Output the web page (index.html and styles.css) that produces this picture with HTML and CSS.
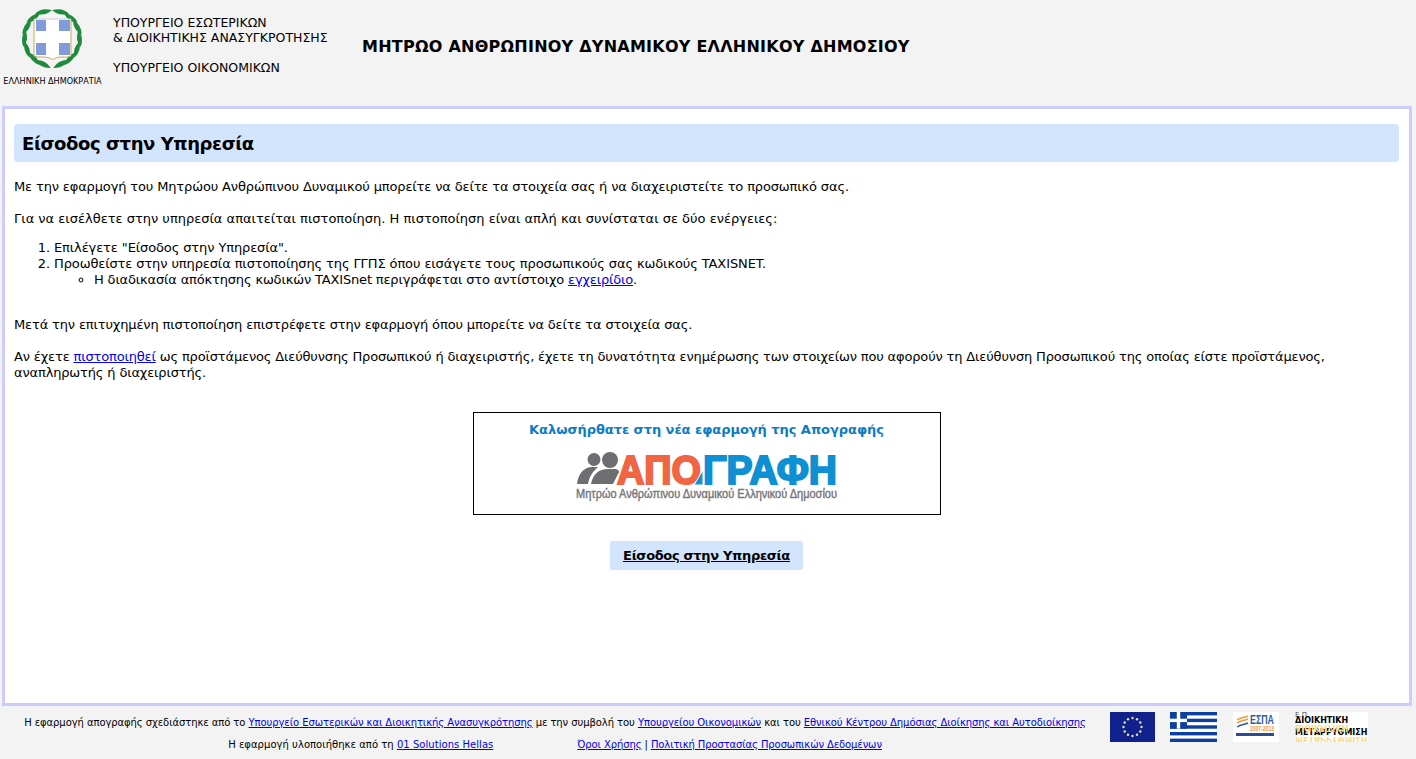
FILE: index.html
```html
<!DOCTYPE html>
<html lang="el">
  <head>
    <meta charset="UTF-8" />
    <title>Μητρώο Ανθρώπινου Δυναμικού Ελληνικού Δημοσίου</title>
    <link rel="stylesheet" href="styles.css">
  </head>
  <body>
    <div class="header">
      <div class="emblem">
        <svg width="72" height="68" viewBox="0 0 72 68">
          <defs>
            <path id="leaf" d="M27 5.5 Q35 -0.5 44 3.5 Q36 9.5 27 5.5 Z" fill="#1f8a3c" />
          </defs>
          <g>
            <use href="#leaf" transform="rotate(17 35 32)" />
            <use href="#leaf" transform="rotate(42 35 32)" />
            <use href="#leaf" transform="rotate(66 35 32)" />
            <use href="#leaf" transform="rotate(90 35 32)" />
            <use href="#leaf" transform="rotate(114 35 32)" />
            <use href="#leaf" transform="rotate(138 35 32)" />
            <use href="#leaf" transform="rotate(160 35 32)" />
            <use href="#leaf" transform="translate(70 0) scale(-1 1) rotate(17 35 32)" />
            <use href="#leaf" transform="translate(70 0) scale(-1 1) rotate(42 35 32)" />
            <use href="#leaf" transform="translate(70 0) scale(-1 1) rotate(66 35 32)" />
            <use href="#leaf" transform="translate(70 0) scale(-1 1) rotate(90 35 32)" />
            <use href="#leaf" transform="translate(70 0) scale(-1 1) rotate(114 35 32)" />
            <use href="#leaf" transform="translate(70 0) scale(-1 1) rotate(138 35 32)" />
            <use href="#leaf" transform="translate(70 0) scale(-1 1) rotate(160 35 32)" />
          </g>
          <path d="M17 13 H54 V49 C54 51 51 51 46 51 C41 51 37 52 35.5 54 C34 52 30 51 25 51 C20 51 17 51 17 49 Z" fill="#fff" />
          <path d="M17 13 V49 C17 51 20 51 25 51 C30 51 34 52 35.5 54 C37 52 41 51 46 51 C51 51 54 51 54 49 V13" fill="none" stroke="#c9a94f" stroke-width="1" />
          <path d="M17 13 H54" stroke="#c8c8c8" stroke-width="1" />
          <rect x="19" y="14" width="10" height="11" fill="#7f9bdc" />
          <rect x="42" y="14" width="11" height="11" fill="#7f9bdc" />
          <rect x="19" y="37" width="10" height="12" fill="#7f9bdc" />
          <rect x="42" y="37" width="11" height="12" fill="#7f9bdc" />
        </svg>
        <div class="emblem-name">ΕΛΛΗΝΙΚΗ ΔΗΜΟΚΡΑΤΙΑ</div>
      </div>
      <div class="ministries">
        ΥΠΟΥΡΓΕΙΟ ΕΣΩΤΕΡΙΚΩΝ<br />
        &amp; ΔΙΟΙΚΗΤΙΚΗΣ ΑΝΑΣΥΓΚΡΟΤΗΣΗΣ<br /><br />
        ΥΠΟΥΡΓΕΙΟ ΟΙΚΟΝΟΜΙΚΩΝ
      </div>
      <div class="app-title">ΜΗΤΡΩΟ ΑΝΘΡΩΠΙΝΟΥ ΔΥΝΑΜΙΚΟΥ ΕΛΛΗΝΙΚΟΥ ΔΗΜΟΣΙΟΥ</div>
    </div>

    <div class="panel">
      <h1 class="page-title">Είσοδος στην Υπηρεσία</h1>

      <p>Με την εφαρμογή του Μητρώου Ανθρώπινου Δυναμικού μπορείτε να δείτε τα στοιχεία σας ή να διαχειριστείτε το προσωπικό σας.</p>
      <p class="intro">Για να εισέλθετε στην υπηρεσία απαιτείται πιστοποίηση. Η πιστοποίηση είναι απλή και συνίσταται σε δύο ενέργειες:</p>

      <ol class="steps">
        <li>Επιλέγετε "Είσοδος στην Υπηρεσία".</li>
        <li>Προωθείστε στην υπηρεσία πιστοποίησης της ΓΓΠΣ όπου εισάγετε τους προσωπικούς σας κωδικούς TAXISNET.
          <ul>
            <li>Η διαδικασία απόκτησης κωδικών TAXISnet περιγράφεται στο αντίστοιχο <a href="#">εγχειρίδιο</a>.</li>
          </ul>
        </li>
      </ol>

      <p>Μετά την επιτυχημένη πιστοποίηση επιστρέφετε στην εφαρμογή όπου μπορείτε να δείτε τα στοιχεία σας.</p>
      <p class="long">Αν έχετε <a href="#">πιστοποιηθεί</a> ως προϊστάμενος Διεύθυνσης Προσωπικού ή διαχειριστής, έχετε τη δυνατότητα ενημέρωσης των στοιχείων που αφορούν τη Διεύθυνση Προσωπικού της οποίας είστε προϊστάμενος, αναπληρωτής ή διαχειριστής.</p>

      <div class="welcome">
        <div class="welcome-text">Καλωσήρθατε στη νέα εφαρμογή της Απογραφής</div>
        <svg class="logo" width="262" height="56" viewBox="0 0 262 56">
          <g fill="#6d6e71">
            <circle cx="18" cy="13.5" r="6.5" />
            <circle cx="34" cy="14" r="8" />
            <path d="M1 38 C2 28 8 21 16 21 L22 21 C16 26 13 32 12 38 Z" />
            <path d="M15 38 C17 28 23 23 32 23 L40 23 C43 24 44 26 42 28 L37 38 Z" />
          </g>
          <text x="41" y="38" class="logo-word logo-red" textLength="84" lengthAdjust="spacingAndGlyphs">ΑΠΟ</text>
          <text x="127" y="38" class="logo-word logo-blue" textLength="134" lengthAdjust="spacingAndGlyphs">ΓΡΑΦΗ</text>
          <path d="M127 24 L127 39 L118 39 Z" fill="#0e90d2" stroke="#fff" stroke-width="1" />
          <text x="0" y="52" class="logo-sub" textLength="261" lengthAdjust="spacingAndGlyphs">Μητρώο Ανθρώπινου Δυναμικού Ελληνικού Δημοσίου</text>
        </svg>
      </div>

      <div class="enter-wrap">
        <a class="enter-btn" href="#">Είσοδος στην Υπηρεσία</a>
      </div>
    </div>

    <div class="footer">
      <div class="footer-text">
        <div class="footer-first">Η εφαρμογή απογραφής σχεδιάστηκε από το <a href="#">Υπουργείο Εσωτερικών και Διοικητικής Ανασυγκρότησης</a> με την συμβολή του <a href="#">Υπουργείου Οικονομικών</a> και του <a href="#">Εθνικού Κέντρου Δημόσιας Διοίκησης και Αυτοδιοίκησης</a></div>
        <div class="footer-second">
          <span class="made-by">Η εφαρμογή υλοποιήθηκε από τη <a href="#">01 Solutions Hellas</a></span>
          <span class="terms"><a href="#">Όροι Χρήσης</a> | <a href="#">Πολιτική Προστασίας Προσωπικών Δεδομένων</a></span>
        </div>
      </div>
      <div class="footer-logos">
        <svg width="45" height="30" viewBox="0 0 45 30">
          <rect width="45" height="30" fill="#10218b" />
          <g fill="#e8e4b0">
            <circle cx="22.5" cy="6" r="1.2" /><circle cx="27" cy="7.2" r="1.2" /><circle cx="30.3" cy="10.5" r="1.2" />
            <circle cx="31.5" cy="15" r="1.2" /><circle cx="30.3" cy="19.5" r="1.2" /><circle cx="27" cy="22.8" r="1.2" />
            <circle cx="22.5" cy="24" r="1.2" /><circle cx="18" cy="22.8" r="1.2" /><circle cx="14.7" cy="19.5" r="1.2" />
            <circle cx="13.5" cy="15" r="1.2" /><circle cx="14.7" cy="10.5" r="1.2" /><circle cx="18" cy="7.2" r="1.2" />
          </g>
        </svg>
        <svg width="47" height="30" viewBox="0 0 47 30">
          <rect width="47" height="30" fill="#fff" />
          <g fill="#0d3f9e">
            <rect width="47" height="3.4" />
            <rect y="6.7" width="47" height="3.4" />
            <rect y="13.3" width="47" height="3.4" />
            <rect y="20" width="47" height="3.4" />
            <rect y="26.6" width="47" height="3.4" />
            <rect width="17" height="16.7" />
          </g>
          <rect x="6.8" width="3.4" height="16.7" fill="#fff" />
          <rect y="6.7" width="17" height="3.4" fill="#fff" />
        </svg>
        <svg width="46" height="30" viewBox="0 0 46 30">
          <rect width="46" height="30" fill="#fff" />
          <g fill="none" stroke="#f2993a" stroke-width="1.5">
            <path d="M4 8 C8 5 11 6 15 4" />
            <path d="M4 11 C8 8 11 9 15 7" />
          </g>
          <path d="M4 15 C8 12 11 13 15 11" fill="none" stroke="#2c5ca8" stroke-width="1.5" />
          <text x="17" y="12" class="espa-name" textLength="24" lengthAdjust="spacingAndGlyphs">ΕΣΠΑ</text>
          <text x="17" y="19" class="espa-years" textLength="24" lengthAdjust="spacingAndGlyphs">2007-2013</text>
          <rect x="3" y="21" width="38" height="3" fill="#2c4c94" />
        </svg>
        <div class="reform">
          <div class="reform-ep">Ε.Π.</div>
          <div class="reform-line">ΔΙΟΙΚΗΤΙΚΗ</div>
          <div class="reform-line reform-mirror">ΔΙΟΙΚΗΤΙΚΗ</div>
          <div class="reform-line">ΜΕΤΑΡΡΥΘΜΙΣΗ</div>
          <div class="reform-line reform-mirror">ΜΕΤΑΡΡΥΘΜΙΣΗ</div>
        </div>
      </div>
    </div>
  </body>
</html>
```

FILE: styles.css
```css
* {
  box-sizing: border-box;
}

body {
  margin: 0;
  width: 1416px;
  height: 759px;
  overflow: hidden;
  background: #f3f3f3;
  font-family: "DejaVu Sans", Verdana, sans-serif;
  font-size: 13px;
  color: #000;
}

a {
  color: #0000ee;
}

.header {
  height: 106px;
  display: flex;
  align-items: flex-start;
}

.emblem {
  width: 105px;
  padding-top: 6px;
  text-align: center;
}

.emblem svg {
  display: block;
  margin: 0 0 0 17px;
}

.emblem-name {
  font-size: 8.1px;
  line-height: 10px;
  margin-top: 2px;
  white-space: nowrap;
}

.ministries {
  margin-left: 8px;
  padding-top: 15px;
  width: 249px;
  font-size: 12.5px;
  line-height: 15px;
  white-space: nowrap;
}

.app-title {
  padding-top: 37px;
  font-size: 16px;
  line-height: 19px;
  font-weight: bold;
  letter-spacing: 0.24px;
  white-space: nowrap;
}

.panel {
  margin: 0 4px 0 2px;
  height: 600px;
  padding: 15px 10px 0 9px;
  background: #fff;
  border: 3px solid #ccccff;
}

.page-title {
  margin: 0 0 17px;
  height: 38px;
  padding-left: 8px;
  background: #d3e4fd;
  border-radius: 4px;
  font-size: 18px;
  line-height: 39px;
  font-weight: bold;
  letter-spacing: -0.42px;
}

.panel p {
  margin: 0 0 16px;
  line-height: 16px;
  letter-spacing: -0.14px;
}

.panel p.intro {
  margin-bottom: 13px;
  letter-spacing: 0;
}

.panel p.long {
  letter-spacing: -0.15px;
}

.steps {
  margin: 0 0 29px;
  padding-left: 40px;
  line-height: 16px;
  letter-spacing: -0.11px;
}

.steps ul {
  margin: 0;
  padding-left: 40px;
  letter-spacing: -0.16px;
}

.welcome {
  margin: 31px auto 0;
  width: 468px;
  height: 103px;
  border: 1px solid #000;
  text-align: center;
}

.welcome-text {
  margin-top: 9px;
  color: #0a7cc4;
  font-size: 13px;
  line-height: 16px;
  font-weight: bold;
  letter-spacing: -0.05px;
}

.logo {
  display: block;
  margin: 8px auto 0;
}

.logo-word {
  font-family: "Liberation Sans", Arial, sans-serif;
  font-size: 40px;
  font-weight: bold;
  stroke-width: 2px;
}

.logo-red {
  fill: #f06543;
  stroke: #f06543;
}

.logo-blue {
  fill: #0e90d2;
  stroke: #0e90d2;
}

.logo-sub {
  font-family: "Liberation Sans", Arial, sans-serif;
  font-size: 13px;
  fill: #77787b;
  stroke: #77787b;
  stroke-width: 0.45px;
}

.enter-wrap {
  margin-top: 26px;
  text-align: center;
}

.enter-btn {
  display: inline-block;
  width: 193px;
  height: 29px;
  background: #d3e4fd;
  border-radius: 2px;
  color: #000;
  font-size: 13px;
  line-height: 29px;
  font-weight: bold;
  letter-spacing: -0.33px;
}

.footer {
  display: flex;
  align-items: flex-start;
  height: 53px;
}

.footer-text {
  width: 1110px;
  padding-top: 10px;
  font-size: 10px;
  line-height: 14px;
  text-align: center;
  white-space: nowrap;
}

.footer-first {
  letter-spacing: -0.07px;
}

.footer-second {
  margin-top: 8px;
  display: flex;
  justify-content: center;
  gap: 84px;
}

.made-by {
  letter-spacing: 0.04px;
}

.terms {
  letter-spacing: -0.1px;
}

.footer-logos {
  display: flex;
  align-items: flex-start;
  gap: 15px;
  padding-top: 6px;
}

.footer-logos svg {
  display: block;
}

.footer-logos svg:nth-child(2),
.footer-logos svg:nth-child(3) {
  margin-right: 1px;
}

.espa-name {
  font-family: "Liberation Sans", Arial, sans-serif;
  font-size: 12px;
  font-weight: bold;
  fill: #2c5ca8;
}

.espa-years {
  font-family: "Liberation Sans", Arial, sans-serif;
  font-size: 7px;
  font-weight: bold;
  fill: #f2993a;
}

.reform {
  width: 73px;
  height: 30px;
  background: #fff;
  font-size: 8px;
  font-weight: bold;
  white-space: nowrap;
  overflow: hidden;
}

.reform-ep {
  height: 6px;
  font-size: 7px;
  line-height: 6px;
  font-weight: normal;
  color: #444;
}

.reform-line {
  height: 6px;
  line-height: 6px;
}

.reform-mirror {
  transform: scaleY(-1);
  color: #f8dc8a;
}
```
